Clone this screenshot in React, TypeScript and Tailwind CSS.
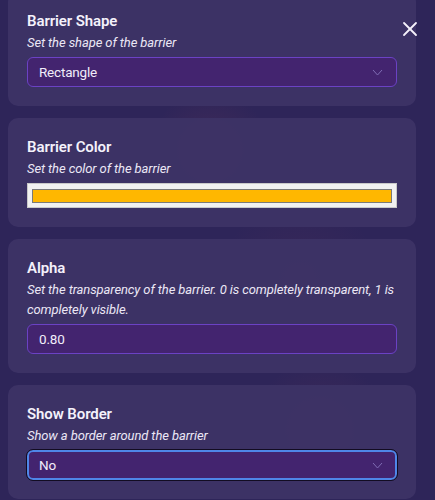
import { X } from 'lucide-react';

const FONT = "font-['Roboto','Liberation_Sans',sans-serif]";

function Chevron() {
  return (
    <svg width="11" height="7" viewBox="0 0 11 7" fill="none" className="shrink-0">
      <path d="M1 1 L5.5 6 L10 1" stroke="#7f6cb4" strokeWidth="1" />
    </svg>
  );
}

function Card({ title, desc, children }: { title: string; desc: string; children: React.ReactNode }) {
  return (
    <div className="rounded-[10px] bg-[#3d3366]/95 px-[19px] pt-[19px] pb-[19px]">
      <div className="text-[15px] leading-5 font-semibold tracking-[-0.1px] text-[#f4f1fb]">{title}</div>
      <div className="mt-[2px] text-[13px] leading-5 italic tracking-[-0.1px] text-[#ebe7f5]">{desc}</div>
      <div className="mt-1">{children}</div>
    </div>
  );
}

function Select({ value, focused }: { value: string; focused?: boolean }) {
  return (
    <div
      className={
        focused
          ? 'flex h-[30px] items-center justify-between rounded-[6px] border-2 border-[#4f86e8] bg-[#43246f] pl-[10px] pr-[12px] outline outline-1 outline-[#120c22]'
          : 'flex h-[30px] items-center justify-between rounded-[6px] border border-[#6b42c4] bg-[#43246f] pl-[11px] pr-[13px]'
      }
    >
      <span className="text-[13.5px] tracking-[-0.2px] text-[#f1edfa]">{value}</span>
      <Chevron />
    </div>
  );
}

function App() {
  return (
    <div className={`relative h-[500px] w-[435px] overflow-hidden bg-[#2e2559] ${FONT}`}>
      <div className="pointer-events-none absolute inset-0 bg-[radial-gradient(circle_at_210px_150px,rgba(120,60,90,0.25),transparent_60px),radial-gradient(circle_at_320px_430px,rgba(120,60,90,0.22),transparent_70px),radial-gradient(circle_at_300px_280px,rgba(120,60,90,0.15),transparent_80px)]" />
      <div className="relative -mt-2 flex w-[416px] flex-col gap-3 pl-2">
        <Card title="Barrier Shape" desc="Set the shape of the barrier">
          <Select value="Rectangle" />
        </Card>
        <Card title="Barrier Color" desc="Set the color of the barrier">
          <div className="flex h-[25px] items-center border border-[#c9c9c9] bg-[#f1f1f1] px-[4px]">
            <div className="h-[14px] w-full border border-[#7a7a7a] bg-[#ffb700]" />
          </div>
        </Card>
        <Card
          title="Alpha"
          desc="Set the transparency of the barrier. 0 is completely transparent, 1 is completely visible."
        >
          <div className="flex h-[30px] items-center rounded-[6px] border border-[#6b42c4] bg-[#43246f] pl-[11px]">
            <span className="text-[13.5px] tracking-[-0.2px] text-[#f1edfa]">0.80</span>
          </div>
        </Card>
        <Card title="Show Border" desc="Show a border around the barrier">
          <Select value="No" focused />
        </Card>
      </div>
      <button type="button" className="absolute top-[17px] left-[398px] text-[#f4f1fb]">
        <X size={24} strokeWidth={1.8} />
      </button>
    </div>
  );
}

export default App;
